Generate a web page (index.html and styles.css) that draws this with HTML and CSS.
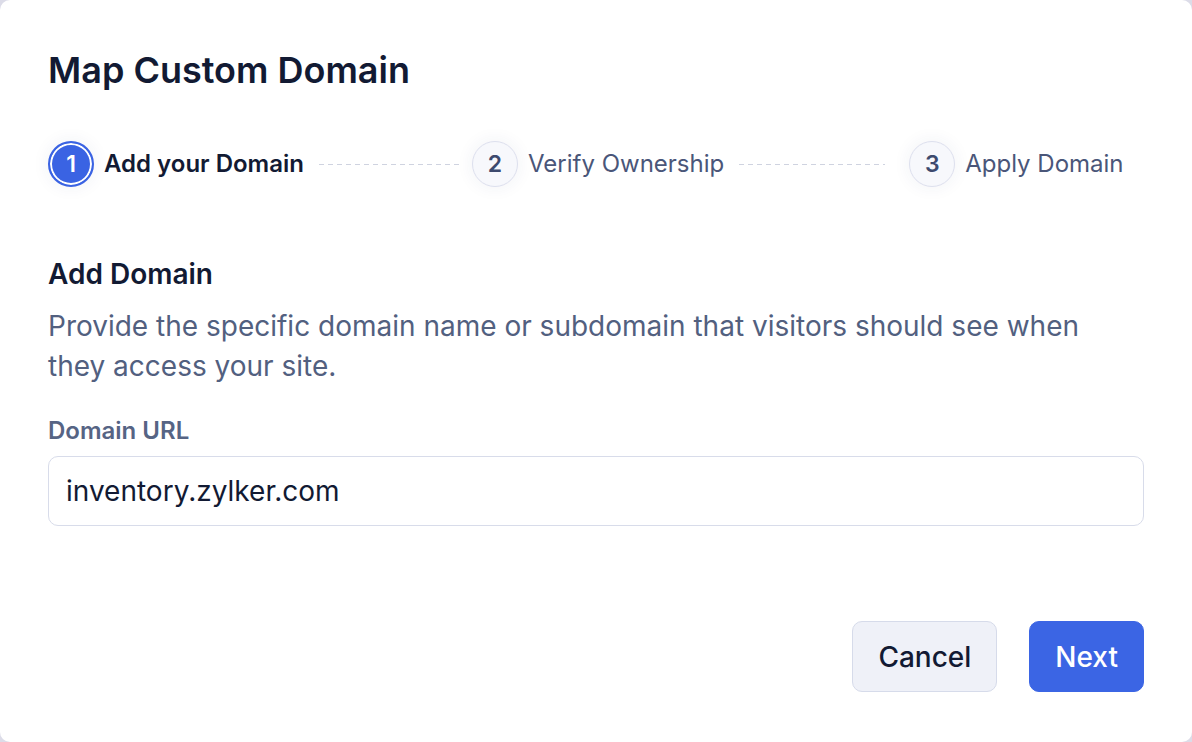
FILE: index.html
```html
<!DOCTYPE html>
<html lang="en">
<head>
<meta charset="utf-8">
<title>Map Custom Domain</title>
<link rel="stylesheet" href="styles.css">
</head>
<body>
<div class="dialog">
  <h1 class="title">Map Custom Domain</h1>
  <div class="stepper">
    <div class="step step-active">
      <span class="step-num">1</span>
      <span class="step-label">Add your Domain</span>
    </div>
    <div class="connector connector-1"></div>
    <div class="step">
      <span class="step-num">2</span>
      <span class="step-label">Verify Ownership</span>
    </div>
    <div class="connector connector-2"></div>
    <div class="step">
      <span class="step-num">3</span>
      <span class="step-label">Apply Domain</span>
    </div>
  </div>
  <h2 class="section-title">Add Domain</h2>
  <p class="section-desc">Provide the specific domain name or subdomain that visitors should see when they access your site.</p>
  <label class="field-label" for="domain">Domain URL</label>
  <input class="field-input" id="domain" type="text" value="inventory.zylker.com">
  <div class="actions">
    <button class="btn btn-secondary" type="button">Cancel</button>
    <button class="btn btn-primary" type="button">Next</button>
  </div>
</div>
</body>
</html>
```
FILE: styles.css
```css
html {
  background: #dcdce8;
}
body {
  margin: 0;
  font-family: Inter, "Noto Sans", "Liberation Sans", sans-serif;
  color: #121a33;
}
.dialog {
  box-sizing: border-box;
  height: 742px;
  background: #ffffff;
  border-radius: 10px;
  padding: 48px 48px 50px 48px;
  display: flex;
  flex-direction: column;
}
.title {
  margin: 0;
  font-size: 36px;
  line-height: 44px;
  font-weight: 600;
  color: #121a33;
}
.stepper {
  margin-top: 49px;
  display: flex;
  align-items: center;
  height: 46px;
}
.step {
  display: flex;
  align-items: center;
  gap: 10px;
}
.step-num {
  box-sizing: border-box;
  width: 46px;
  height: 46px;
  border-radius: 50%;
  border: 1.5px solid #dde0ee;
  background: #f7f8fc;
  color: #3d4a6e;
  font-size: 23px;
  font-weight: 600;
  display: flex;
  align-items: center;
  justify-content: center;
  box-shadow: 0 0 18px rgba(40, 50, 110, 0.07);
}
.step-label {
  font-size: 24px;
  line-height: 32px;
  color: #4a5679;
}
.step-active .step-num {
  background: #3a63e3;
  border: 2.5px solid #3a63e3;
  color: #ffffff;
  box-shadow: inset 0 0 0 2px #ffffff, 0 0 18px rgba(40, 50, 110, 0.07);
}
.step-active .step-label {
  font-weight: 600;
  color: #121a33;
}
.connector {
  height: 1px;
  background: repeating-linear-gradient(90deg, #cfd3e0 0 5px, transparent 5px 9px);
}
.connector-1 {
  width: 144px;
  margin: 0 9px 0 15px;
}
.connector-2 {
  width: 146px;
  margin: 0 24px 0 15px;
}
.section-title {
  margin: 69px 0 0 0;
  font-size: 28px;
  line-height: 36px;
  font-weight: 600;
  color: #121a33;
}
.section-desc {
  margin: 14px 0 0 0;
  font-size: 28px;
  line-height: 40px;
  color: #52607f;
}
.field-label {
  margin-top: 29px;
  font-size: 24px;
  line-height: 32px;
  font-weight: 600;
  color: #566484;
}
.field-input {
  margin-top: 9px;
  box-sizing: border-box;
  height: 70px;
  width: 100%;
  border: 1.5px solid #d8dcea;
  border-radius: 10px;
  padding: 0 17px;
  font-family: inherit;
  font-size: 28px;
  color: #121a33;
  background: #ffffff;
  outline: none;
}
.actions {
  margin-top: auto;
  display: flex;
  justify-content: flex-end;
  gap: 32px;
}
.btn {
  box-sizing: border-box;
  height: 71px;
  padding: 0 25px;
  border-radius: 10px;
  font-family: inherit;
  font-size: 28px;
  font-weight: 500;
  cursor: pointer;
}
.btn-secondary {
  background: #eff1f8;
  border: 1.5px solid #d6dbea;
  color: #121a33;
}
.btn-primary {
  background: #3b65e4;
  border: 1.5px solid #3b65e4;
  color: #ffffff;
}
```
